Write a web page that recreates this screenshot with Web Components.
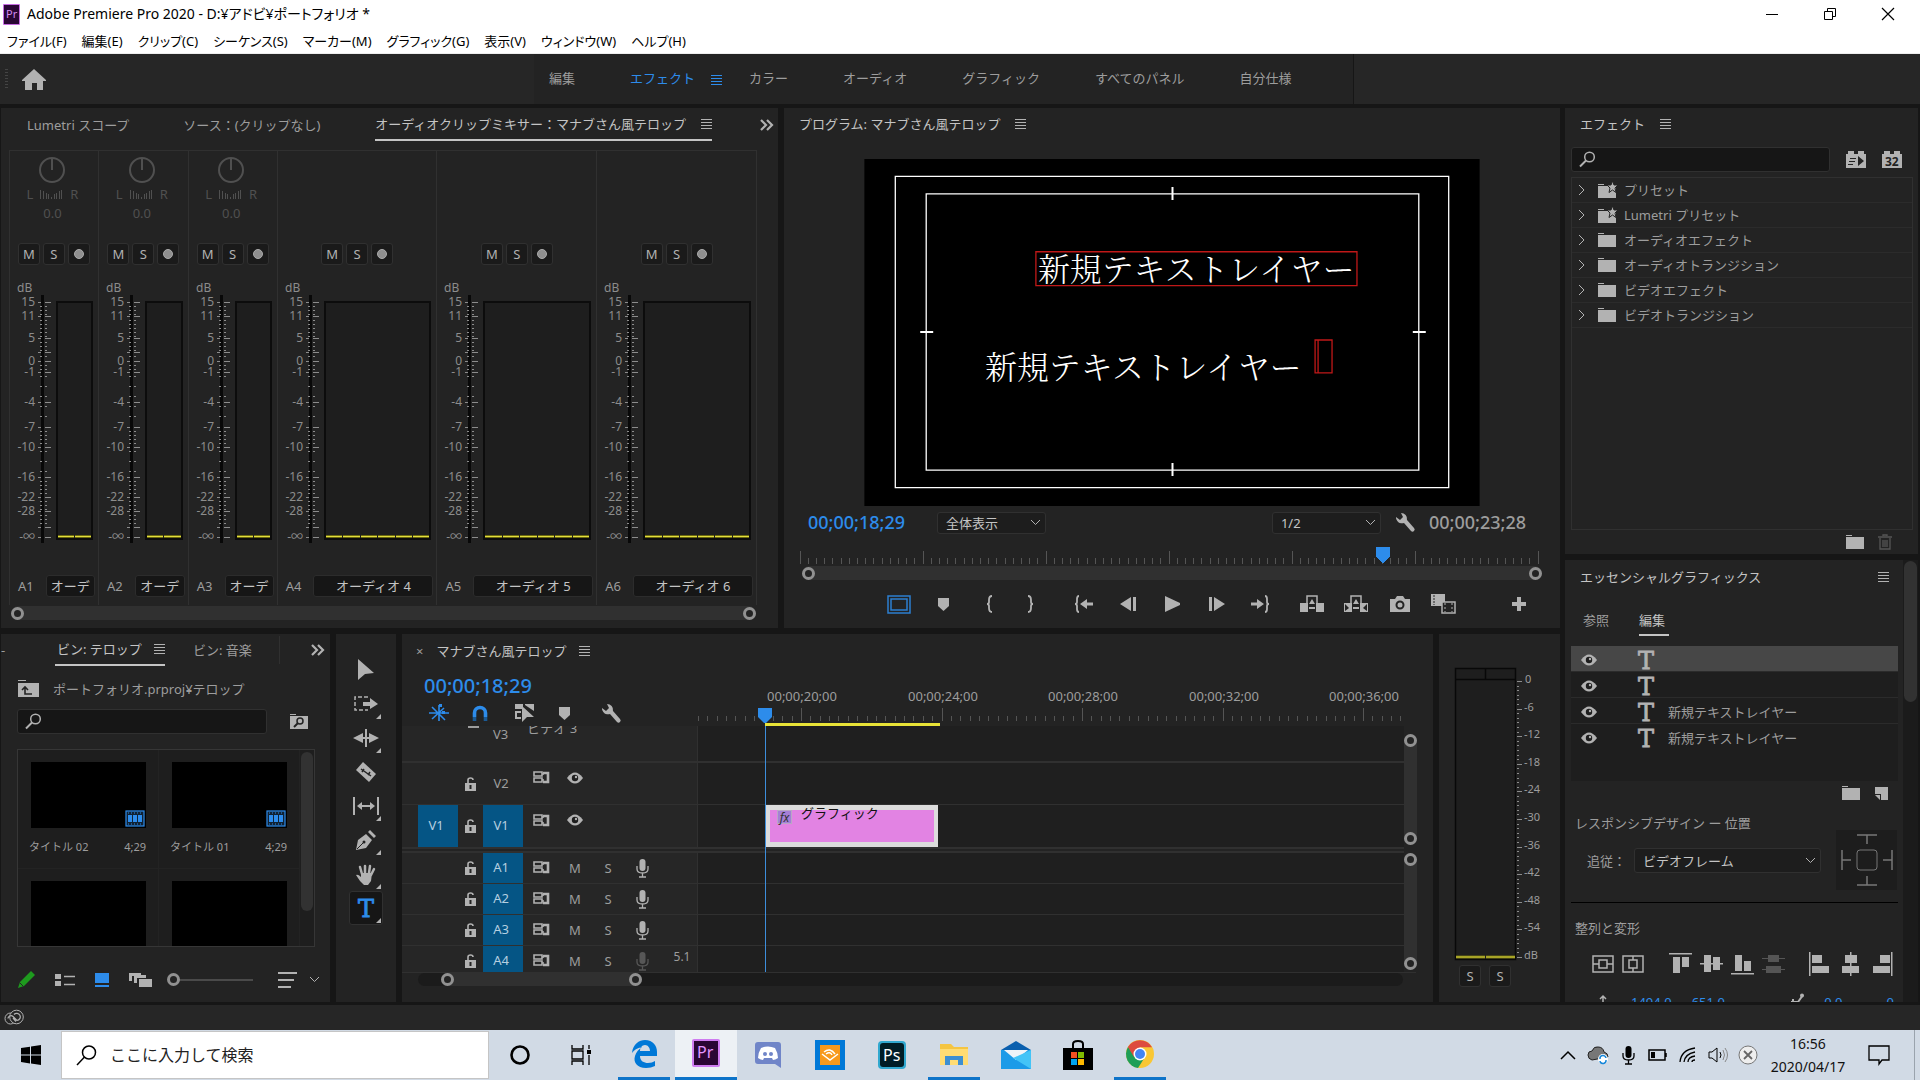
<!DOCTYPE html>
<html lang="ja">
<head>
<meta charset="utf-8">
<title>Adobe Premiere Pro 2020</title>
<style>
	body {
		margin: 0;
		font: 13px/20px "Noto Sans", "Noto Sans CJK JP", sans-serif;
		background: #161616;
		color: #9d9d9d;
		overflow: hidden;
	}
</style>
</head>
<body>
<premiere-app></premiere-app>

<script>
// name: [width, height, markup]
const ICONS = {
	pr: [17, 21, '<rect width="17" height="21" rx="1" fill="#c46be0"/><rect x="1" y="1" width="15" height="19" fill="#2a0634"/><text x="3" y="14" font-size="11" fill="#d58cf0">Pr</text>'],
	min: [14, 14, '<path d="M1 7.5h12" stroke="currentColor"/>'],
	max: [14, 14, '<path d="M1.5 4.5h8v8h-8zM4.5 4.5v-3h8v8h-3" fill="none" stroke="currentColor"/>'],
	close: [14, 14, '<path d="M1 1l12 12M13 1L1 13" stroke="currentColor" stroke-width="1.2"/>'],
	home: [24, 22, '<path d="M12 0L24 11v1h-3v9h-6v-7h-5v7H3v-9H0v-1z"/>'],
	menu: [11, 12, '<path d="M0 1.5h11M0 4.5h11M0 7.5h11M0 10.5h11" stroke="currentColor"/>'],
	more: [14, 12, '<path d="M1 1l5 5-5 5M7 1l5 5-5 5" fill="none" stroke="currentColor" stroke-width="2.2"/>'],
	dial: [28, 28, '<circle cx="14" cy="14" r="12" fill="none" stroke="currentColor" stroke-width="2"/><path d="M14 3v11" stroke="currentColor" stroke-width="2"/>'],
	pan: [23, 9, '<path d="M.5 0v9M3.500 1v8M6.500 3v6M8.500 4v5M11.500 7v2M14.500 4v5M16.500 3v6M19.500 1v8M21.500 0v9" stroke="currentColor"/>'],
	rec: [10, 12, '<circle cx="5" cy="6" r="4.5" fill="#8f8f8f" stroke="#aaa"/>'],
	chevron: [11, 7, '<path d="M1 1l4.5 4.5L10 1" fill="none" stroke="currentColor"/>'],
	arrow: [7, 12, '<path d="M1 1l5 5-5 5" fill="none" stroke="currentColor"/>'],
	search: [17, 17, '<circle cx="10.5" cy="6" r="4.8" fill="none" stroke="currentColor" stroke-width="1.5"/><path d="M7 9.5L1 15.5" stroke="currentColor" stroke-width="2"/>'],
	wrench: [20, 20, '<path d="M6 1a6 6 0 0 1 6 7l7 8a2 2 0 0 1-3 3l-7-8a6 6 0 0 1-8-6l4 3 3-3z"/>'],
	safe: [24, 19, '<rect x="1" y="1" width="22" height="17" fill="none" stroke="#2d7fd0" stroke-width="1.5"/><rect x="4" y="4" width="16" height="11" fill="none" stroke="#2d7fd0" stroke-width="1.5"/>'],
	marker: [13, 15, '<path d="M1 1h11v8l-5.500 5L1 9z"/>'],
	inpoint: [8, 18, '<path d="M6 1q-3 0-3 4v2q0 2-2 2 2 0 2 2v2q0 4 3 4" fill="none" stroke="currentColor" stroke-width="1.8"/>'],
	outpoint: [8, 18, '<path d="M2 1q3 0 3 4v2q0 2 2 2-2 0-2 2v2q0 4-3 4" fill="none" stroke="currentColor" stroke-width="1.8"/>'],
	goin: [20, 18, '<path d="M5 1Q3 1 3 4v3q0 2-2 2 2 0 2 2v3q0 3 2 3" fill="none" stroke="currentColor" stroke-width="1.8"/><path d="M6 9l7-5v3.500h6v3h-6V14z"/>'],
	goout: [20, 18, '<path d="M15 1q2 0 2 3v3q0 2 2 2-2 0-2 2v3q0 3-2 3" fill="none" stroke="currentColor" stroke-width="1.8"/><path d="M14 9L7 4v3.500H1v3h6V14z"/>'],
	back: [17, 14, '<path d="M0 7l11-7v14zM13 0h3v14h-3z"/>'],
	play: [17, 16, '<path d="M1 0l15 7v2L1 16z"/>'],
	forward: [17, 14, '<path d="M17 7L6 0v14zM1 0h3v14H1z"/>'],
	lift: [26, 18, '<path d="M1 8h8v9H1zM17 8h8v9h-8z"/><path d="M8 12V1h10v11" fill="none" stroke="currentColor" stroke-width="1.5"/><path d="M9 2h8v9H9z" fill="#232323"/><path d="M13 4l3 5h-6zM10 12h6v2h-6z"/>'],
	extract: [26, 18, '<path d="M1 8h8v9H1zM17 8h8v9h-8z"/><path d="M8 12V1h10v11" fill="none" stroke="currentColor" stroke-width="1.5"/><path d="M9 2h8v9H9zM2 9l4 4-4 3zM24 9l-4 4 4 3z" fill="#232323"/><path d="M13 4l3 5h-6zM10 12h6v2h-6z"/>'],
	camera: [20, 16, '<path d="M0 3h5l2-3h6l2 3h5v13H0z"/><circle cx="10" cy="9" r="3.5" fill="none" stroke="#232323" stroke-width="2"/>'],
	compare: [26, 20, '<path d="M0 0h14v12H0z"/><rect x="11" y="8" width="13" height="11" fill="#232323" stroke="currentColor" stroke-width="1.5"/><path d="M3 1v10" stroke="#232323" stroke-dasharray="2 1"/><path d="M14 9v9M21 9v9" stroke="currentColor" stroke-dasharray="2 2"/>'],
	plus: [14, 14, '<path d="M5 0h4v5h5v4H9v5H5V9H0V5h5z"/>'],
	folder: [18, 15, '<path d="M0 0h6v1H0zM0 2h18v12H0z"/>'],
	preset: [19, 17, '<path d="M0 2h6v1H0zM0 4h18v12H0z"/><path d="M14.500 -1l1.500 4h4l-3 3 1 4.500-3.500-2.500-3.500 2.500 1-4.500-3-3h4z" stroke="#232323"/>'],
	accel: [20, 17, '<path d="M0 3h2V0h6v3h4V0h6v3h2v14H0z"/><path d="M12 5l6 5-6 5zM4 7h6v1H4zM3 10h6v1H3zM2 13h5v1H2z" fill="#232323"/>'],
	bits: [20, 17, '<path d="M0 3h2V0h6v3h4V0h6v3h2v14H0z"/><text x="3" y="15" font-size="12" font-weight="700" fill="#232323">32</text>'],
	trash: [14, 16, '<path d="M0 3h14M5 2V1h4v1M2 4v11h10V4M5 6v7M7 6v7M9 6v7" fill="none" stroke="currentColor" stroke-width="1.3"/>'],
	eye: [16, 12, '<path d="M0 6q8-11 16 0-8 11-16 0z"/><circle cx="8" cy="6" r="3.2" fill="#1e1e1e"/><circle cx="9" cy="5" r="1.2"/>'],
	type: [20, 20, '<text x="10" y="19" text-anchor="middle" font-size="24" font-family="DejaVu Serif, serif" stroke="currentColor" stroke-width=".8">T</text>'],
	newitem: [13, 13, '<path d="M0 0h13v13H6V7H0z"/><path d="M0 8h5v5z"/>'],
	pin: [54, 54, '<path d="M17 2h20M27 2v9M17 52h20M27 52v-9M2 17v20M2 27h9M52 17v20M52 27h-9" stroke="currentColor" stroke-width="1.5"/><rect x="17" y="17" width="20" height="20" rx="3" fill="none" stroke="currentColor"/>'],
	centerv: [22, 18, '<path d="M1 1h20v16H1zM1 9h6M15 9h6M7 5h8v8H7z" fill="none" stroke="currentColor" stroke-width="1.5"/>'],
	centerh: [22, 18, '<path d="M1 1h20v16H1zM11 1v4M11 13v4M7 5h8v8H7z" fill="none" stroke="currentColor" stroke-width="1.5"/>'],
	atop: [23, 22, '<path d="M0 0h23v1.5H0zM4 4h7v16H4zM13 4h7v10h-7z"/>'],
	amid: [23, 22, '<path d="M0 10h23v1.5H0zM4 2h7v17H4zM13 4h7v13h-7z"/>'],
	abot: [23, 22, '<path d="M0 20h23v1.5H0zM4 2h7v16H4zM13 8h7v10h-7z"/>'],
	adist: [23, 22, '<path d="M0 5h23v1H0zM0 16h23v1H0zM6 2h11v7H6zM4 13h15v7H4z"/>'],
	aleft: [20, 24, '<path d="M0 0h1.5v24H0zM3 3h10v8H3zM3 14h17v7H3z"/>'],
	acen: [20, 24, '<path d="M9 0h1.5v24H9zM4 3h12v8H4zM1 14h17v7H1z"/>'],
	aright: [20, 24, '<path d="M18 0h1.5v24H18zM7 3h10v8H7zM0 14h17v7H0z"/>'],
	anchor: [16, 14, '<path d="M8 2v12M5 4l3-3 3 3M2 7v5h12V7" fill="none" stroke="currentColor" stroke-width="1.5"/>'],
	node: [14, 14, '<path d="M1 9h7l5-7M3 6v7" fill="none" stroke="currentColor" stroke-width="2"/><circle cx="12" cy="2.5" r="2"/>'],
	upfolder: [21, 17, '<path d="M0 0h8v1H0zM0 3h21v14H0z"/><path d="M14 14H7V8M4 10l3-3 3 3" fill="none" stroke="#232323" stroke-width="1.6"/>'],
	findfolder: [18, 15, '<path d="M0 0h6v1H0zM0 2h18v13H0z"/><circle cx="10" cy="7" r="3" fill="none" stroke="#232323" stroke-width="1.5"/><path d="M8 9l-4 4" stroke="#232323" stroke-width="2"/>'],
	film: [20, 17, '<rect x="1" y="1" width="18" height="15" fill="#123" stroke="#2d8ceb" stroke-width="1.2"/><path d="M3 5h4v7H3zM8 5h4v7H8zM13 5h4v7h-4z" fill="#2d8ceb"/><path d="M3 3h14M3 14h14" stroke="#2d8ceb" stroke-dasharray="1 2"/>'],
	pencil: [17, 17, '<path d="M13 0l4 4L6 15l-6 2 2-6z" fill="#1e9a1e"/><path d="M2 12l3 3" stroke="#232323"/>'],
	list: [20, 14, '<path d="M0 1h6v5H0zM0 8h6v5H0z"/><path d="M9 3.5h11M9 11.5h11" stroke="currentColor" stroke-width="1.5"/>'],
	thumbs: [14, 14, '<path d="M0 0h14v10H0zM0 12h14v2H0z" fill="#2d8ceb"/>'],
	stack: [24, 14, '<path d="M0 0h12v3H3v5H0zM5 2h12v3H8v5H5zM10 6h13v8H10z"/>'],
	sort: [19, 17, '<path d="M0 1h19v2H0zM0 8h16v2H0zM0 15h13v2H0z"/>'],
	select: [16, 22, '<path d="M0 0l16 14-9 1-7 6z"/>'],
	trackfwd: [24, 16, '<path d="M14 1H1v13h13" fill="none" stroke="currentColor" stroke-width="1.5" stroke-dasharray="4 2"/><path d="M9 6h7V2l8 6-8 5V10H9z"/>'],
	ripple: [26, 18, '<path d="M12 0h2v18h-2zM0 9l10-5v4h6V4l10 5-10 5v-4h-6v4z"/>'],
	razor: [20, 20, '<path d="M7 0l13 12-7 8L0 8z"/><path d="M5 7l10 7M6 10l2-3M12 13l2-3" stroke="#232323" stroke-width="1.5"/>'],
	slip: [26, 18, '<path d="M0 0h2v18H0zM24 0h2v18h-2zM4 9l5-4v3h8V5l5 4-5 4v-3H9v3z"/>'],
	pen: [20, 20, '<path d="M0 20l2-10 8-6 6 6-6 8zM12 2l2-2 6 6-2 2z"/><path d="M1 19l7-7" stroke="#232323"/><circle cx="8" cy="12" r="1.5" fill="#232323"/>'],
	hand: [20, 21, '<path d="M6 10L4 3M9 9V2M13 9l1-7M15 11l3-6" stroke="currentColor" stroke-width="2.5" stroke-linecap="round"/><path d="M5 9h11l-1 8-3 4H8l-4-4-4-6q2-1 5 2z"/>'],
	corner: [5, 5, '<path d="M5 0v5H0z"/>'],
	nest: [20, 18, '<path d="M0 9h20M10 1v16M3 3l13 13M3 15L15 4" stroke="currentColor" stroke-width="1.6"/><path d="M10 0h3v3h-3zM13 7h3v3h-3z"/>'],
	magnet: [16, 16, '<path d="M2.500 12V8a5.500 5.500 0 0 1 11 0v4" fill="none" stroke="currentColor" stroke-width="3.6"/><path d="M2.500 12v4M13.500 12v4" stroke="#1a5a96" stroke-width="3.6"/>'],
	linked: [20, 18, '<path d="M0 0h8v5H0zM10 0h9v7l-9-6zM0 7h6v2H2v4h4v2H0z"/><path d="M7 2l12 11h-7l-5 5z"/>'],
	lock: [12, 15, '<path d="M0 6h11v8H0z"/><path d="M3 6V3q0-2 2.500-2T8 3" fill="none" stroke="currentColor" stroke-width="1.6"/><path d="M5.5 8v4" stroke="#232323" stroke-width="2"/>'],
	sync: [17, 13, '<path d="M1 1h8v4H1zM1 7h8v4H1zM9 3h2M9 9h2" fill="none" stroke="currentColor" stroke-width="1.6"/><path d="M10 2h5v9h-5" fill="none" stroke="currentColor" stroke-width="2.6"/>'],
	mic: [13, 19, '<rect x="3.5" y="0" width="6" height="12" rx="3"/><path d="M1 7v3q0 4 5.500 4T12 10V7M6.500 14v4M3 18h7" fill="none" stroke="currentColor" stroke-width="1.3"/>'],
	cc: [20, 16, '<circle cx="6.5" cy="9.5" r="5.5" fill="none" stroke="currentColor"/><circle cx="12.5" cy="8" r="6.8" fill="#262626" stroke="currentColor"/><path d="M9 9l3 3.500M4 9.500a3 3 0 0 1 5-2l4 4a3.600 3.600 0 1 0-3-6" fill="none" stroke="currentColor" stroke-width="1.2"/>'],
	windows: [20, 20, '<path d="M0 3l9-1.300V9.500H0zM10 1.500L20 0v9.500H10zM0 10.500h9v8L0 17zM10 10.500h10V20l-10-1.500z"/>'],
	find: [21, 21, '<circle cx="13" cy="7.5" r="6.5" fill="none" stroke="currentColor" stroke-width="1.5"/><path d="M8.5 12L1 20" stroke="currentColor" stroke-width="1.5"/>'],
	cortana: [22, 22, '<circle cx="11" cy="11" r="8.5" fill="none" stroke="currentColor" stroke-width="2.6"/>'],
	taskview: [22, 20, '<path d="M1 0v4h11V0M1 20v-4h11v4M1 6h11v8H1zM18 0v4M18 10v10" fill="none" stroke="currentColor" stroke-width="1.3"/><path d="M16 5h4v4h-4z"/>'],
	edge: [26, 28, '<path d="M1 13C2 4 8 0 14 0c8 0 12 6 12 12v4H9c0 5 4 7 8 7 3 0 5-1 7-2v5c-3 1-5 2-9 2C6 28 2 22 4 16c1-4 4-7 7-9-5 1-8 3-10 6zM9 11h10c0-3-2-6-5-6s-5 3-5 6z" fill="#0078d7"/>'],
	premiere: [30, 29, '<rect x="1" width="28" height="28" rx="2" fill="#ce7cf0"/><rect x="3" y="2" width="24" height="24" fill="#2a0634"/><text x="6" y="19" font-size="16" fill="#e295ff">Pr</text>'],
	discord: [26, 26, '<path d="M3 0h20q3 0 3 3v23l-6-4H3q-3 0-3-3V3q0-3 3-3z" fill="#7085c8"/><path d="M6 6q7-3 14 0 3 5 3 10-3 2-5 2l-1-2H9l-1 2q-2 0-5-2 0-5 3-10z" fill="#fff"/><circle cx="10" cy="12" r="2" fill="#7085c8"/><circle cx="16" cy="12" r="2" fill="#7085c8"/>'],
	audible: [30, 30, '<path d="M0 0h30v30H0z" fill="#0078d7"/><path d="M5 5h20v20H5z" fill="#f8991d"/><path d="M7 14l8 6 8-6M9 12q6-5 11 2M11 14q4-3 6 1" fill="none" stroke="#fff" stroke-width="1.5"/>'],
	photoshop: [30, 29, '<rect x="1" width="28" height="28" rx="4" fill="#31a8cf"/><rect x="3" y="2" width="24" height="24" rx="3" fill="#001d26"/><text x="6" y="20" font-size="16" fill="#fff">Ps</text>'],
	explorer: [30, 26, '<path d="M1 3h11l3 3h14v18H1z" fill="#f5c542"/><path d="M1 8h28v16H1z" fill="#ffdc73"/><path d="M6 24v-9h18v9h-5v-5h-8v5z" fill="#3d8fd1"/>'],
	mail: [30, 28, '<path d="M0 9l15-9 15 9z" fill="#0a5fae"/><path d="M0 9h30v19H0z" fill="#1c9be8"/><path d="M3 9h24L15 19z" fill="#f0f4f8"/><path d="M30 9v19L12 17z" fill="#43c4f7"/>'],
	store: [30, 30, '<path d="M0 8h30v22H0z"/><path d="M10 8V4q0-3 5-3t5 3v4" fill="none" stroke="currentColor" stroke-width="2"/><path d="M8 12h6v6H8z" fill="#f25022"/><path d="M15 12h6v6h-6z" fill="#7fba00"/><path d="M8 19h6v6H8z" fill="#00a4ef"/><path d="M15 19h6v6h-6z" fill="#ffb900"/>'],
	chrome: [28, 28, '<circle cx="14" cy="14" r="14" fill="#f9c734"/><path d="M14 14L2 7a14 14 0 0 0 10 21l7-11z" fill="#1e9e57"/><path d="M1.9 7A14 14 0 0 1 26 7.200H14L8 17z" fill="#dd4b3e"/><circle cx="14" cy="14" r="6.5" fill="#fff"/><circle cx="14" cy="14" r="5" fill="#4285f4"/>'],
	caret: [16, 10, '<path d="M1 9l7-7 7 7" fill="none" stroke="currentColor" stroke-width="1.5"/>'],
	cloud: [20, 18, '<path d="M4 14Q0 13 0 9t4-4Q6 0 10 1q5 0 6 5 4 1 4 5z" fill="#777" stroke="#222"/><circle cx="15" cy="13" r="5" fill="#fff"/><path d="M12 13a3 3 0 0 1 6-1M18 14a3 3 0 0 1-6 1" fill="none" stroke="#1686d9" stroke-width="1.5"/>'],
	battery: [20, 12, '<path d="M1 1h16v10H1zM18 4v4" fill="none" stroke="currentColor" stroke-width="1.5"/><path d="M3 3h4v6H3z"/>'],
	wifi: [18, 16, '<path d="M1 15Q2 3 16 1M5 15Q6 7 16 5M9 15q0-5 7-6M13 15q0-2 3-2" fill="none" stroke="currentColor" stroke-width="1.3"/>'],
	speaker: [20, 16, '<path d="M1 5h3l5-4v14l-5-4H1zM12 5q2 3 0 6" fill="none" stroke="currentColor"/><path d="M15 3q3 5 0 10M17 1q5 7 0 14" fill="none" stroke="#888"/>'],
	error: [20, 20, '<circle cx="10" cy="10" r="9" fill="#eee" stroke="#777"/><path d="M6 6l8 8M14 6l-8 8" stroke="#666" stroke-width="1.8"/>'],
	notice: [22, 20, '<path d="M1 1h20v14h-7l-3 4v-4H1z" fill="none" stroke="currentColor" stroke-width="1.3"/>']
};

const icon = (name) => `<pp-icon name="${name}"></pp-icon>`;

const baseStyle = `
	* { box-sizing: border-box; }
	:host { display: block; min-width: 0; min-height: 0; }
	button {
		display: flex; align-items: center; justify-content: center;
		padding: 0; border: 0; background: none; color: inherit; font: inherit;
	}
	input { font: inherit; color: #ccc; min-width: 0; }
	pp-icon { color: #b2b2b2; }
`;

const panelStyle = `
	:host { background: #232323; display: flex; flex-direction: column; overflow: hidden; }
	.tabs { display: flex; align-items: center; height: 32px; flex: none; white-space: nowrap; }
	.tabs .on { color: #c4c4c4; }
`;

class BaseElement extends HTMLElement {

	constructor() {
		super();
		this.shadowDOM = this.attachShadow({mode: 'open'});
	}

	connectedCallback() {
		this.shadowDOM.innerHTML = `<style>${baseStyle}${this.css()}</style>${this.template()}`;
	}

	css() { return ''; }
	template() { return ''; }
}

class PpIcon extends BaseElement {
	css() {
		return ':host { display: inline-flex; flex: none; } svg { display: block; fill: currentColor; overflow: visible; }';
	}
	template() {
		const [w, h, body] = ICONS[this.getAttribute('name')];
		return `<svg width="${w}" height="${h}" viewBox="0 0 ${w} ${h}" aria-hidden="true">${body}</svg>`;
	}
}

// drop-down, with an optional visible caption before it
class PpSelect extends BaseElement {
	css() {
		return `
			:host { display: grid; grid-template-columns: auto minmax(0, 1fr); align-items: center; }
			label { margin-right: 8px; }
			select, pp-icon { grid-area: 1 / 2; }
			select {
				appearance: none; width: 100%; height: 100%; padding: 0 8px; font: inherit;
				color: #c4c4c4; background: #1d1d1d; border: 1px solid #303030; border-radius: 3px;
			}
			pp-icon { justify-self: end; margin-right: 5px; pointer-events: none; }
		`;
	}
	template() {
		const caption = this.getAttribute('caption');
		return `
			${caption ? `<label for="choice">${caption}</label>` : ''}
			<select id="choice" ${caption ? '' : `aria-label="${this.getAttribute('label')}"`}><option>${this.getAttribute('value')}</option></select>
			${icon('chevron')}
		`;
	}
}

// scroll bar with a round handle at each end
class ZoomBar extends BaseElement {
	css() {
		return `
			:host { display: flex; height: 14px; border-radius: 7px; background: #1d1d1d; }
			.thumb { flex: 1; display: flex; justify-content: space-between; align-items: center; background: #303030; border-radius: 7px; }
			i { width: 13px; height: 13px; border: 3px solid #919191; border-radius: 50%; background: #232323; }
			:host([vertical]) { width: 12px; height: auto; }
			:host([vertical]) .thumb { flex-direction: column; }
		`;
	}
	template() { return '<div class="thumb"><i></i><i></i></div>'; }
}

class AppTitle extends BaseElement {
	css() {
		return `
			:host { background: #fff; color: #000; height: 54px; font-size: 14px; border-bottom: 1px solid #eee; font-feature-settings: "palt"; }
			.title { display: flex; align-items: center; height: 28px; padding: 0 3px; }
			.title span { flex: 1; margin-left: 7px; }
			.title button { width: 58px; height: 28px; }
			.title button pp-icon { color: #000; }
			nav { display: flex; gap: 15px; padding-left: 7px; height: 26px; align-items: center; font-size: 13px; }
		`;
	}
	template() {
		const menus = ['ファイル(F)', '編集(E)', 'クリップ(C)', 'シーケンス(S)', 'マーカー(M)', 'グラフィック(G)', '表示(V)', 'ウィンドウ(W)', 'ヘルプ(H)'];
		return `
			<div class="title">${icon('pr')}<span>Adobe Premiere Pro 2020 - D:¥アドビ¥ポートフォリオ *</span>
				<button aria-label="最小化">${icon('min')}</button>
				<button aria-label="最大化">${icon('max')}</button>
				<button aria-label="閉じる">${icon('close')}</button>
			</div>
			<nav>${menus.map(m => `<button>${m}</button>`).join('')}</nav>
		`;
	}
}

class WorkspaceBar extends BaseElement {
	css() {
		return `
			:host { display: flex; align-items: center; height: 50px; background: #262626; }
			.grip { width: 3px; height: 20px; margin: 0 14px 0 5px; background: repeating-linear-gradient(#444 0 1px, transparent 1px 3px); }
			.home { flex: 0 0 512px; justify-content: flex-start; padding-top: 2px; }
			nav { display: flex; align-items: center; gap: 55px; height: 50px; padding: 0 62px 2px 15px; background: #232323; border-right: 1px solid #161616; }
			.now { color: #2d8ceb; margin-right: -28px; gap: 16px; }
			.now pp-icon { color: #2d8ceb; padding-top: 3px; }
		`;
	}
	template() {
		return `
			<div class="grip"></div>
			<button class="home" aria-label="ホーム">${icon('home')}</button>
			<nav>
				<button>編集</button><button class="now">エフェクト${icon('menu')}</button><button>カラー</button>
				<button>オーディオ</button><button>グラフィック</button><button>すべてのパネル</button><button>自分仕様</button>
			</nav>
		`;
	}
}

class MixerStrip extends BaseElement {
	css() {
		return `
			:host { display: flex; flex-direction: column; border: 1px solid #303030; border-width: 1px 1px 0 0; }
			.pan { height: 92px; padding: 5px 3px 0 0; display: flex; flex-direction: column; align-items: center; color: #505050; }
			.pan pp-icon { color: #505050; }
			.lr { display: flex; align-items: center; gap: 7px; height: 20px; margin-bottom: -1px; }
			.btns { display: flex; justify-content: center; gap: 3px; }
			.btns button { width: 22px; height: 22px; background: #1a1a1a; border: 1px solid #303030; border-radius: 3px; color: #b2b2b2; }
			.fader { display: flex; margin-top: 18px; }
			svg { flex: none; }
			text { fill: #8c8c8c; font-size: 12px; }
			.meter { flex: 1; height: 239px; margin: 18px 5px 0 0; background: #1e1e1e; border: 2px solid #0c0c0c; display: flex; align-items: flex-end; gap: 1px; }
			.meter i { flex: 1; height: 3px; background: #e3de3e; border: solid #6c6a10; border-width: 1px 0; }
			.name { display: flex; align-items: center; gap: 12px; margin-top: 28px; padding: 0 3px 0 8px; }
			.name button { flex: 1; height: 22px; min-width: 0; white-space: nowrap; overflow: hidden; background: #161616; border: 1px solid #2c2c2c; border-radius: 3px; color: #c4c4c4; }
		`;
	}
	template() {
		const wide = this.hasAttribute('wide');
		const marks = [['15', 19], ['11', 33], ['5', 55], ['', 69], ['0', 78], ['-1', 89], ['-4', 119], ['-7', 144], ['-10', 164], ['-16', 194], ['-22', 214], ['-28', 228], ['', 244], ['-∞', 254]];
		let dots = '';
		marks.slice(0, -2).forEach(([, y], i) => {
			const n = marks[i + 1][1] - y;
			for (let d = 4; d < n - 1; d += n > 24 ? 10 : 4) {
				dots += `M30 ${y + d}h2M35 ${y + d}h2`;
			}
		});
		return `
			<div class="pan">${wide ? '' : `${icon('dial')}<div class="lr">L ${icon('pan')} R</div><span>0.0</span>`}</div>
			<div class="btns"><button>M</button><button>S</button><button aria-label="キーフレーム">${icon('rec')}</button></div>
			<div class="fader">
				<svg width="46" height="264">
					<text x="7" y="9">dB</text>
					<path d="M32.5 12v248" stroke="#080808" stroke-width="3"/>
					<path d="${dots}${marks.map(m => `M28 ${m[1]}h3M35 ${m[1]}h6`).join('')}" stroke="#8c8c8c" shape-rendering="crispEdges"/>
					${marks.filter(m => m[0]).map(m => `<text x="25" y="${m[1] + 4}" text-anchor="end">${m[0]}</text>`).join('')}
				</svg>
				<div class="meter">${'<i></i>'.repeat(wide ? 6 : 2)}</div>
			</div>
			<div class="name"><span>${this.getAttribute('track')}</span><button>${this.getAttribute('label')}</button></div>
		`;
	}
}

class AudioMixer extends BaseElement {
	css() {
		return panelStyle + `
			.tabs { padding: 0 4px 0 26px; height: 34px; }
			.tabs .on { display: flex; align-items: center; gap: 15px; height: 32px; margin-left: auto; border-bottom: 2px solid #c4c4c4; }
			.tabs .src { margin-left: 54px; }
			.tabs .more { margin-left: 48px; }
			.strips { display: grid; grid-template-columns: 89fr 90fr 89fr 160fr 160fr 160fr; margin: 8px 21px 0 8px; border-left: 1px solid #303030; flex: 1; min-height: 0; }
			zoom-bar { margin: 1px 22px 8px 10px; }
		`;
	}
	template() {
		return `
			<div class="tabs"><button>Lumetri スコープ</button><button class="src">ソース：(クリップなし)</button>
				<button class="on">オーディオクリップミキサー：マナブさん風テロップ${icon('menu')}</button>
				<button class="more" aria-label="その他">${icon('more')}</button></div>
			<div class="strips">
				<mixer-strip track="A1" label="オーデ"></mixer-strip>
				<mixer-strip track="A2" label="オーデ"></mixer-strip>
				<mixer-strip track="A3" label="オーデ"></mixer-strip>
				<mixer-strip wide track="A4" label="オーディオ 4"></mixer-strip>
				<mixer-strip wide track="A5" label="オーディオ 5"></mixer-strip>
				<mixer-strip wide track="A6" label="オーディオ 6"></mixer-strip>
			</div>
			<zoom-bar></zoom-bar>
		`;
	}
}

class ProgramMonitor extends BaseElement {
	css() {
		return panelStyle + `
			.tabs { padding-left: 15px; gap: 15px; }
			.screen { flex: 1; min-height: 0; margin-top: 19px; }
			.screen svg { display: block; width: 100%; height: 100%; }
			.row { display: flex; align-items: center; height: 32px; padding: 0 34px 0 24px; }
			.time { font-size: 18px; font-weight: 500; }
			.blue { color: #2d8ceb; margin-right: 32px; }
			pp-select { width: 109px; height: 21px; }
			.res { margin-left: auto; margin-right: 14px; }
			.row pp-icon { margin-right: 14px; }
			.ruler { height: 18px; margin: 9px 22px 1px 16px; }
			.ruler svg { display: block; width: 100%; height: 18px; overflow: visible; }
			zoom-bar { margin: 0 18px; }
			.transport { display: flex; height: 48px; align-items: center; padding: 0 19px 0 93px; }
			.transport div { display: flex; }
			.transport button { width: 44px; height: 28px; }
			.marks { margin: 0 12px 0 5px; }
			.marks button { width: 40px; }
			.cut { margin-left: 8px; }
			.transport .add { margin-left: auto; }
		`;
	}
	template() {
		let ticks = '';
		for (let i = 0; i <= 90; i++) {
			const x = i / 0.9;
			ticks += `<line x1="${x}%" x2="${x}%" y1="${i % 15 ? 11 : 4}" y2="17" stroke="#555"/>`;
		}
		const btn = ([name, label]) => `<button aria-label="${label}">${icon(name)}</button>`;
		return `
			<div class="tabs"><span class="on">プログラム: マナブさん風テロップ</span>${icon('menu')}</div>
			<div class="screen">
				<svg viewBox="0 0 617 348">
					<rect width="617" height="348"/>
					<g fill="none" stroke="#fff" stroke-width="1.3">
						<path d="M31 17.500h555v312H31zM62 35h494v277H62z"/>
						<path d="M309 28v13M309 305v13M56 173.500h13M550 173.500h13" stroke-width="2"/>
						<path d="M172 93h322v34H172zM452 181.500h17v33h-17zM455 181v34" stroke="#c01818"/>
					</g>
					<g fill="#fff" font-size="32" font-weight="300" font-family="Noto Serif CJK JP, Noto Sans CJK JP, serif">
						<text x="174" y="122">新規テキストレイヤー</text>
						<text x="121" y="221">新規テキストレイヤー</text>
					</g>
				</svg>
			</div>
			<div class="row">
				<span class="time blue">00;00;18;29</span><pp-select label="ズームレベル" value="全体表示"></pp-select>
				<pp-select class="res" label="再生時の解像度" value="1/2"></pp-select>${icon('wrench')}<span class="time">00;00;23;28</span>
			</div>
			<div class="ruler"><svg shape-rendering="crispEdges">${ticks}<svg x="79%" overflow="visible"><path d="M-7 0H7v10L0 16l-7-6z" fill="#2d8ceb"/></svg></svg></div>
			<zoom-bar></zoom-bar>
			<div class="transport">
				<div>${[['safe', 'セーフマージン'], ['marker', 'マーカーを追加']].map(btn).join('')}</div>
				<div class="marks">${[['inpoint', 'インをマーク'], ['outpoint', 'アウトをマーク']].map(btn).join('')}</div>
				<div>${[['goin', 'インへ移動'], ['back', '前のフレーム'], ['play', '再生'], ['forward', '次のフレーム'], ['goout', 'アウトへ移動']].map(btn).join('')}</div>
				<div class="cut">${[['lift', 'リフト'], ['extract', '抽出'], ['camera', 'フレームを書き出し'], ['compare', '比較表示']].map(btn).join('')}</div>
				<button class="add" aria-label="ボタンエディター">${icon('plus')}</button>
			</div>
		`;
	}
}

class SearchBox extends BaseElement {
	css() {
		return `
			:host { display: flex; align-items: center; height: 25px; padding-left: 7px; border: 1px solid #303030; background: #161616; border-radius: 3px; }
			input { flex: 1; height: 100%; border: 0; background: none; outline: 0; }
		`;
	}
	template() { return `${icon('search')}<input type="text" aria-label="検索">`; }
}

class EffectsPanel extends BaseElement {
	css() {
		return panelStyle + `
			.tabs { padding-left: 15px; gap: 15px; }
			.find { display: flex; align-items: center; margin: 7px 16px 5px 6px; gap: 16px; }
			search-box { flex: 1; }
			ul { flex: 1; margin: 0 5px 0 6px; padding: 0; border: 1px solid #303030; list-style: none; }
			li { height: 25px; border-bottom: 1px solid #2b2b2b; display: flex; align-items: center; padding-left: 6px; }
			li .arrow { width: 7px; margin-right: 13px; }
			li .pic { width: 26px; display: flex; }
			.foot { display: flex; justify-content: flex-end; align-items: center; gap: 14px; height: 24px; padding-right: 26px; }
			.foot button:last-child pp-icon { color: #555; }
		`;
	}
	template() {
		const rows = ['プリセット', 'Lumetri プリセット', 'オーディオエフェクト', 'オーディオトランジション', 'ビデオエフェクト', 'ビデオトランジション'];
		return `
			<div class="tabs"><span class="on">エフェクト</span>${icon('menu')}</div>
			<div class="find"><search-box></search-box><button aria-label="高速処理エフェクト">${icon('accel')}</button><button aria-label="32-bit">${icon('bits')}</button></div>
			<ul>${rows.map((r, i) => `<li><button class="arrow" aria-label="展開">${icon('arrow')}</button><span class="pic">${icon(i < 2 ? 'preset' : 'folder')}</span>${r}</li>`).join('')}</ul>
			<div class="foot"><button aria-label="新規ビン">${icon('folder')}</button><button aria-label="削除">${icon('trash')}</button></div>
		`;
	}
}

class GraphicsPanel extends BaseElement {
	css() {
		return panelStyle + `
			:host { flex-direction: row; }
			.main { flex: 1; min-width: 0; padding: 0 5px 0 6px; }
			.scroll { width: 15px; background: #1b1b1b; padding: 1px; }
			.scroll i { display: block; height: 141px; border-radius: 7px; background: #323232; }
			.tabs { justify-content: space-between; padding: 0 9px; height: 34px; }
			.sub { display: flex; gap: 26px; padding: 13px 0 0 12px; height: 52px; }
			.sub button { height: 29px; padding: 0 4px 2px 0; border-bottom: 2px solid transparent; }
			.sub .on { color: #c4c4c4; border-color: #c4c4c4; }
			ul { margin: 0; padding: 0; height: 135px; list-style: none; background: #1e1e1e; }
			li { display: flex; align-items: center; height: 26px; padding: 2px 0 0 10px; border-bottom: 1px solid #2b2b2b; }
			li:first-child { background: #474747; }
			li button { margin-right: 39px; }
			li span { margin-left: 12px; }
			li:last-child { border: 0; }
			.acts { display: flex; justify-content: flex-end; align-items: center; height: 24px; gap: 15px; padding-right: 10px; }
			.head { padding-left: 4px; height: 28px; line-height: 36px; }
			.pins { display: flex; justify-content: space-between; height: 59px; padding-left: 16px; }
			pp-select { flex: 1; height: 25px; margin: 15px 15px 0 0; }
			.pin { width: 61px; height: 60px; display: grid; place-items: center; background: #1d1d1d; margin: -3px 1px 0 0; }
			.pin pp-icon { color: #777; }
			hr { margin: 10px 0 7px; border: 0; border-top: 1px solid #000; }
			.align { display: flex; align-items: center; gap: 8px; height: 38px; padding-left: 21px; margin-top: 7px; }
			.align .v { margin-left: 17px; }
			.align .h { margin-left: 16px; }
			.align .h ~ button { margin-left: 4px; }
			.align .off pp-icon { color: #555; }
			.pos { display: flex; align-items: center; height: 22px; margin-top: 8px; padding: 0 4px 0 24px; color: #2d8ceb; }
			.pos b { font-weight: 400; margin-left: 20px; }
			.pos .rot { margin-left: auto; }
			.pos b + b:last-child { margin-left: 44px; }
		`;
	}
	template() {
		const b = (name, cls = '') => `<button class="${cls}" aria-label="${name}">${icon(name)}</button>`;
		return `
			<div class="main">
				<div class="tabs"><span class="on">エッセンシャルグラフィックス</span>${icon('menu')}</div>
				<div class="sub"><button>参照</button><button class="on">編集</button></div>
				<ul>${['', '', '新規テキストレイヤー', '新規テキストレイヤー'].map(t => `<li><button aria-label="表示">${icon('eye')}</button>${icon('type')}<span>${t}</span></li>`).join('')}</ul>
				<div class="acts">${b('folder')}${b('newitem')}</div>
				<div class="head">レスポンシブデザイン ー 位置</div>
				<div class="pins"><pp-select caption="追従：" value="ビデオフレーム"></pp-select><div class="pin">${icon('pin')}</div></div>
				<hr>
				<div class="head">整列と変形</div>
				<div class="align">${b('centerv')}${b('centerh')}${b('atop', 'v')}${b('amid')}${b('abot')}${b('adist', 'off')}${b('aleft', 'h')}${b('acen')}${b('aright')}</div>
				<div class="pos">${icon('anchor')}<b>1494.0</b><b>651.0</b><span class="rot">${icon('node')}</span><b>0.0</b><b>0</b></div>
			</div>
			<div class="scroll"><i></i></div>
		`;
	}
}

class BinPanel extends BaseElement {
	css() {
		return panelStyle + `
			.tabs { padding-right: 5px; }
			.tabs .dash { width: 54px; }
			.tabs .on { gap: 12px; height: 32px; padding-left: 2px; border-bottom: 2px solid #c4c4c4; }
			.tabs .next { margin-left: 28px; padding-right: 27px; height: 28px; border-right: 1px solid #303030; }
			.tabs .more { margin-left: auto; }
			.path { display: flex; align-items: center; gap: 14px; height: 43px; padding: 2px 0 0 17px; }
			.find { display: flex; align-items: center; gap: 23px; padding: 0 22px 0 16px; }
			search-box { flex: 1; }
			.grid { flex: 1; min-height: 0; margin: 15px 15px 0 16px; border: 1px solid #363636; background: #1e1e1e; display: flex; overflow: hidden; }
			.cells { flex: 1; display: grid; grid-template-columns: 1fr 1fr; grid-auto-rows: 119px; }
			.cell { padding: 12px 12px 0 13px; border: 1px solid #232323; border-width: 0 1px 1px 0; font-size: 11px; }
			.cell .pic { height: 66px; background: #000; display: flex; align-items: flex-end; justify-content: flex-end; padding: 1px; }
			.cell p { display: flex; justify-content: space-between; margin: 9px 0 0 -2px; }
			.bar { width: 14px; }
			.bar i { display: block; margin: 2px 1px; height: 159px; border-radius: 6px; background: #323232; }
			.foot { display: flex; align-items: center; height: 55px; padding: 10px 10px 0 17px; }
			.foot button { margin-right: 20px; }
			.foot input { appearance: none; width: 86px; height: 13px; margin: 0 25px 0 -6px; background: linear-gradient(#4a4a4a, #4a4a4a) 10px center / 76px 2px no-repeat; }
			.foot input::-webkit-slider-thumb { appearance: none; width: 13px; height: 13px; border: 3px solid #919191; border-radius: 50%; background: #232323; }
			.foot .sort { margin-right: 12px; }
			.foot button:last-child { margin: 0; }
		`;
	}
	template() {
		const cell = (name) => `<div class="cell"><div class="pic">${name ? icon('film') : ''}</div>${name ? `<p><span>${name}</span><span>4;29</span></p>` : ''}</div>`;
		return `
			<div class="tabs"><span class="dash">-</span><button class="on">ビン: テロップ${icon('menu')}</button><button class="next">ビン: 音楽</button><button class="more" aria-label="その他">${icon('more')}</button></div>
			<div class="path">${icon('upfolder')}<span>ポートフォリオ.prproj¥テロップ</span></div>
			<div class="find"><search-box></search-box><button aria-label="ビンを検索">${icon('findfolder')}</button></div>
			<div class="grid"><div class="cells">${cell('タイトル 02')}${cell('タイトル 01')}${cell()}${cell()}</div><div class="bar"><i></i></div></div>
			<div class="foot">
				<button aria-label="書き込み可">${icon('pencil')}</button><button aria-label="リスト">${icon('list')}</button><button aria-label="アイコン">${icon('thumbs')}</button><button aria-label="フリーフォーム">${icon('stack')}</button>
				<input type="range" value="0" aria-label="サイズ">
				<button class="sort" aria-label="並べ替え">${icon('sort')}</button><button aria-label="順序">${icon('chevron')}</button>
			</div>
		`;
	}
}

class ToolStrip extends BaseElement {
	css() {
		return `
			:host { background: #232323; display: flex; flex-direction: column; align-items: center; padding-top: 19px; }
			button { width: 34px; height: 34px; position: relative; border: 1px solid transparent; border-radius: 3px; }
			button.on { background: #161616; border-color: #303030; }
			button.on .glyph { color: #2d8ceb; }
			.more { position: absolute; right: 1px; bottom: 1px; }
		`;
	}
	template() {
		const tools = ['select', 'trackfwd', 'ripple', 'razor', 'slip', 'pen', 'hand', 'type'];
		return tools.map(t => `<button class="${t === 'type' ? 'on' : ''}" aria-label="${t}"><pp-icon class="glyph" name="${t}"></pp-icon>${t === 'select' || t === 'razor' ? '' : '<pp-icon class="more" name="corner"></pp-icon>'}</button>`).join('');
	}
}

class TrackRow extends BaseElement {
	css() {
		return `
			:host { display: flex; height: 31px; border-bottom: 1px solid #303030; }
			:host([kind=video]) { height: 42px; }
			.head { flex: 0 0 296px; display: flex; padding-left: 16px; background: #262626; border-right: 1px solid #303030; overflow: hidden; }
			.head > * { flex: none; display: flex; align-items: center; justify-content: center; }
			.tag { width: 40px; padding: 0 4px 2px 0; }
			.lock { width: 25px; padding: 1px 0 0 1px; }
			.on { background: #055585; color: #b5cfe0; }
			.sync { width: 36px; padding-bottom: 1px; }
			.opt { width: 34px; }
			.opt.m { width: 32px; }
			:host([kind=video]) .sync, :host([kind=video]) .opt { padding-bottom: 12px; }
			.off { opacity: .35; }
			.ch { width: 38px; padding-bottom: 8px; margin-left: 4px; font-size: 12px; }
			.lane { flex: 1; display: flex; background: #1f1f1f; min-width: 0; }
		`;
	}
	template() {
		const id = this.getAttribute('track');
		const video = this.getAttribute('kind') === 'video';
		const opts = video
			? `<button class="opt m" aria-label="トラック出力">${icon('eye')}</button>`
			: `<button class="opt m">M</button><button class="opt">S</button><button class="opt ${id === 'A4' ? 'off' : ''}" aria-label="ボイスオーバー">${icon('mic')}</button>${id === 'A4' ? '<span class="ch">5.1</span>' : ''}`;
		return `
			<div class="head">
				<span class="tag ${id === 'V1' ? 'on' : ''}">${id === 'V1' ? 'V1' : ''}</span>
				<button class="lock" aria-label="ロック">${icon('lock')}</button>
				<button class="tag ${id === 'V2' ? '' : 'on'}">${id}</button>
				<button class="sync" aria-label="同期ロック">${icon('sync')}</button>
				${opts}
			</div>
			<div class="lane"><slot></slot></div>
		`;
	}
}

class TimeLine extends BaseElement {
	css() {
		return panelStyle + `
			:host { position: relative; }
			.tabs { height: 34px; padding-left: 14px; gap: 13px; }
			.top { display: flex; height: 58px; flex: none; }
			.ctrl { flex: 0 0 296px; padding-left: 22px; }
			.time { font-size: 20px; font-weight: 500; line-height: 36px; height: 36px; color: #2d8ceb; }
			.icons { display: flex; align-items: center; height: 18px; }
			.icons button { width: 43px; justify-content: flex-start; padding-left: 5px; }
			.icons .blue pp-icon { color: #2d8ceb; }
			.top svg { flex: 1; min-width: 0; overflow: hidden; margin-right: 29px; }
			.top text { fill: #9d9d9d; font-size: 13px; text-anchor: middle; }
			.body { display: flex; flex: 1; min-height: 0; border-bottom: 1px solid #303030; margin-right: 17px; }
			.rows { flex: 1; min-width: 0; display: flex; flex-direction: column; position: relative; overflow: hidden; }
			.rows > * { flex: none; }
			.v3 { display: flex; height: 37px; border-bottom: 2px solid #303030; overflow: hidden; }
			.v3 .h { flex: 0 0 296px; display: flex; padding-left: 66px; background: #262626; border-right: 1px solid #303030; }
			.v3 .l { flex: 1; background: #1f1f1f; }
			.v3 .h b { width: 11px; height: 2px; background: #9d9d9d; }
			.v3 .h span { margin-left: 14px; line-height: 16px; }
			.v3 .h em { font-style: normal; margin: -8px 0 0 19px; }
			.split { height: 6px; border: 2px solid #303030; border-width: 2px 0; }
			.v1 { border-bottom: 0; }
			.clip { width: 172px; height: 42px; margin-left: 68px; border: 5px solid #dcdcdc; border-width: 5px 4px; background: #e283e3; color: #111; display: flex; gap: 9px; padding-left: 7px; }
			.clip i { width: 15px; height: 14px; line-height: 13px; font-size: 12px; text-align: center; background: #a57fd6; border: 1px solid #b9a6c6; color: #333; }
			.clip span { margin-top: -7px; }
			.line { position: absolute; left: 363px; top: 0; bottom: 0; width: 1px; background: #3d8edb; }
			.bars { flex: 0 0 12px; display: flex; flex-direction: column; }
			.bars zoom-bar:first-child { flex: 0 0 111px; margin: 8px 0 8px; }
			.bars zoom-bar:last-child { flex: 1; margin-bottom: 2px; }
			.hscroll { display: flex; margin: 0 30px 16px 16px; background: #1b1b1b; border-radius: 7px; height: 13px; }
			.hscroll zoom-bar { width: 201px; height: 13px; margin-left: 23px; }
		`;
	}
	template() {
		let ruler = '';
		for (let i = -11; i < 65; i++) {
			const x = 103 + Math.round(i * 140.5 / 15);
			ruler += `M${x} ${i % 15 ? 48 : 40}V53`;
		}
		const times = ['00;00;20;00', '00;00;24;00', '00;00;28;00', '00;00;32;00', '00;00;36;00'];
		const btn = ([name, label, cls]) => `<button class="${cls}" aria-label="${label}">${icon(name)}</button>`;
		return `
			<div class="tabs"><button aria-label="閉じる">×</button><span class="on">マナブさん風テロップ</span>${icon('menu')}</div>
			<div class="top">
				<div class="ctrl"><div class="time">00;00;18;29</div>
					<div class="icons">${[['nest', 'ネスト', 'blue'], ['magnet', 'スナップ', 'blue'], ['linked', 'リンク', ''], ['marker', 'マーカー', ''], ['wrench', '設定', '']].map(btn).join('')}</div></div>
				<svg height="58">
					<path d="${ruler}" stroke="#555" shape-rendering="crispEdges"/>
					${times.map((t, i) => `<text x="${104 + Math.round(i * 140.5)}" y="33">${t}</text>`).join('')}
					<path d="M67 55h175v3H67z" fill="#e8e337"/>
					<path d="M60 40h14v9l-6 6h-2l-6-6z" fill="#2d8ceb"/>
				</svg>
			</div>
			<div class="body">
				<div class="rows">
					<div class="v3"><div class="h"><b></b><span>V3</span><em>ビデオ 3</em></div><div class="l"></div></div>
					<track-row kind="video" track="V2"></track-row>
					<track-row class="v1" kind="video" track="V1"><div class="clip"><i>fx</i><span>グラフィック</span></div></track-row>
					<div class="split"></div>
					<track-row track="A1"></track-row>
					<track-row track="A2"></track-row>
					<track-row track="A3"></track-row>
					<track-row track="A4"></track-row>
					<div class="line"></div>
				</div>
				<div class="bars"><zoom-bar vertical></zoom-bar><zoom-bar vertical></zoom-bar></div>
			</div>
			<div class="hscroll"><zoom-bar></zoom-bar></div>
		`;
	}
}

class LevelMeter extends BaseElement {
	css() {
		return `
			:host { background: #232323; padding: 33px 0 0 15px; }
			svg { display: block; }
			text { fill: #9d9d9d; font-size: 11px; }
			div { display: flex; gap: 8px; padding: 4px 0 0 5px; }
			button { width: 22px; height: 22px; background: #1a1a1a; border: 1px solid #303030; border-radius: 3px; color: #b2b2b2; }
		`;
	}
	template() {
		let ticks = '', labels = '';
		for (let i = 0; i <= 60; i++) {
			const y = 14 + Math.round(i * 4.6);
			ticks += `M63 ${y}h${i % 6 ? 2 : 5}`;
			if (i % 6 === 0) {
				labels += `<text x="${i ? 70 : 71}" y="${y + 2}">${i === 60 ? 'dB' : -i}</text>`;
			}
		}
		return `
			<svg width="105" height="294">
				<path d="M1.5 1.5h60v291h-60zM1.5 12.500h60M31.500 1v12" fill="#1e1e1e" stroke="#080808" stroke-width="1.5"/>
				<path d="M2 290h29M32 290h29" stroke="#6c6a10" stroke-width="3"/>
				<path d="M2 290h29M32 290h29" stroke="#e3de3e"/>
				<path d="${ticks}" stroke="#8c8c8c" shape-rendering="crispEdges"/>${labels}
			</svg>
			<div><button>S</button><button>S</button></div>
		`;
	}
}

class TaskBar extends BaseElement {
	css() {
		return `
			:host { display: flex; height: 50px; background: #d1dae5; color: #111; font-size: 14px; }
			pp-icon { color: #000; }
			.start { width: 61px; }
			.find { flex: 0 0 428px; display: flex; align-items: center; gap: 11px; margin: 1px 0; padding-left: 14px; background: #fff; border: 1px solid #c5c5c5; }
			.find input { flex: 1; border: 0; outline: 0; font-size: 16px; }
			.find input::placeholder { color: #222; opacity: 1; }
			.app { width: 62px; }
			.run { border-bottom: 3px solid #0e74c9; width: 52px; margin: 0 5px; }
			.now { width: 62px; margin: 0; background: #edf1f5; }
			.tray { margin-left: auto; display: flex; }
			.tray button { width: 30px; }
			.clock { display: flex; flex-direction: column; justify-content: center; width: 90px; text-align: center; line-height: 23px; }
			.tray .note { width: 52px; margin-right: 9px; }
			.edge { width: 6px; border-left: 1px solid #9aa3ad; }
		`;
	}
	template() {
		const apps = [['cortana'], ['taskview'], ['edge', 'run'], ['premiere', 'run now'], ['discord'], ['audible'], ['photoshop'], ['explorer', 'run'], ['mail'], ['store'], ['chrome', 'run']];
		const tray = ['caret', 'cloud', 'mic', 'battery', 'wifi', 'speaker', 'error'];
		return `
			<button class="start" aria-label="スタート">${icon('windows')}</button>
			<label class="find">${icon('find')}<input type="text" placeholder="ここに入力して検索" aria-label="検索"></label>
			${apps.map(([n, c = '']) => `<button class="app ${c}" aria-label="${n}">${icon(n)}</button>`).join('')}
			<div class="tray">${tray.map(n => `<button aria-label="${n}">${icon(n)}</button>`).join('')}
				<div class="clock"><span>16:56</span><span>2020/04/17</span></div>
				<button class="note" aria-label="通知">${icon('notice')}</button><div class="edge"></div></div>
		`;
	}
}

class PremiereApp extends BaseElement {
	css() {
		return `
			:host { display: flex; flex-direction: column; height: 100vh; background: #161616; }
			main { flex: 1; min-height: 0; display: grid; grid-template-columns: minmax(0, 1fr) 353px; gap: 5px; padding: 4px 2px 3px 1px; }
			.left { display: grid; grid-template-rows: 520fr 368fr; gap: 6px; min-height: 0; }
			.upper { display: grid; grid-template-columns: 777fr 776fr; gap: 6px; min-height: 0; }
			.lower { display: grid; grid-template-columns: 329px 60px minmax(0, 1fr) 121px; gap: 6px; min-height: 0; }
			.right { display: grid; grid-template-rows: 446fr 442fr; gap: 6px; min-height: 0; }
			footer { height: 25px; background: #262626; padding: 4px; }
		`;
	}
	template() {
		return `
			<app-title></app-title>
			<workspace-bar></workspace-bar>
			<main>
				<div class="left">
					<div class="upper"><audio-mixer></audio-mixer><program-monitor></program-monitor></div>
					<div class="lower"><bin-panel></bin-panel><tool-strip></tool-strip><time-line></time-line><level-meter></level-meter></div>
				</div>
				<div class="right"><effects-panel></effects-panel><graphics-panel></graphics-panel></div>
			</main>
			<footer>${icon('cc')}</footer>
			<task-bar></task-bar>
		`;
	}
}

customElements.define('pp-icon', PpIcon);
customElements.define('pp-select', PpSelect);
customElements.define('zoom-bar', ZoomBar);
customElements.define('search-box', SearchBox);
customElements.define('app-title', AppTitle);
customElements.define('workspace-bar', WorkspaceBar);
customElements.define('mixer-strip', MixerStrip);
customElements.define('audio-mixer', AudioMixer);
customElements.define('program-monitor', ProgramMonitor);
customElements.define('effects-panel', EffectsPanel);
customElements.define('graphics-panel', GraphicsPanel);
customElements.define('bin-panel', BinPanel);
customElements.define('tool-strip', ToolStrip);
customElements.define('track-row', TrackRow);
customElements.define('time-line', TimeLine);
customElements.define('level-meter', LevelMeter);
customElements.define('task-bar', TaskBar);
customElements.define('premiere-app', PremiereApp);
</script>
</body>
</html>
